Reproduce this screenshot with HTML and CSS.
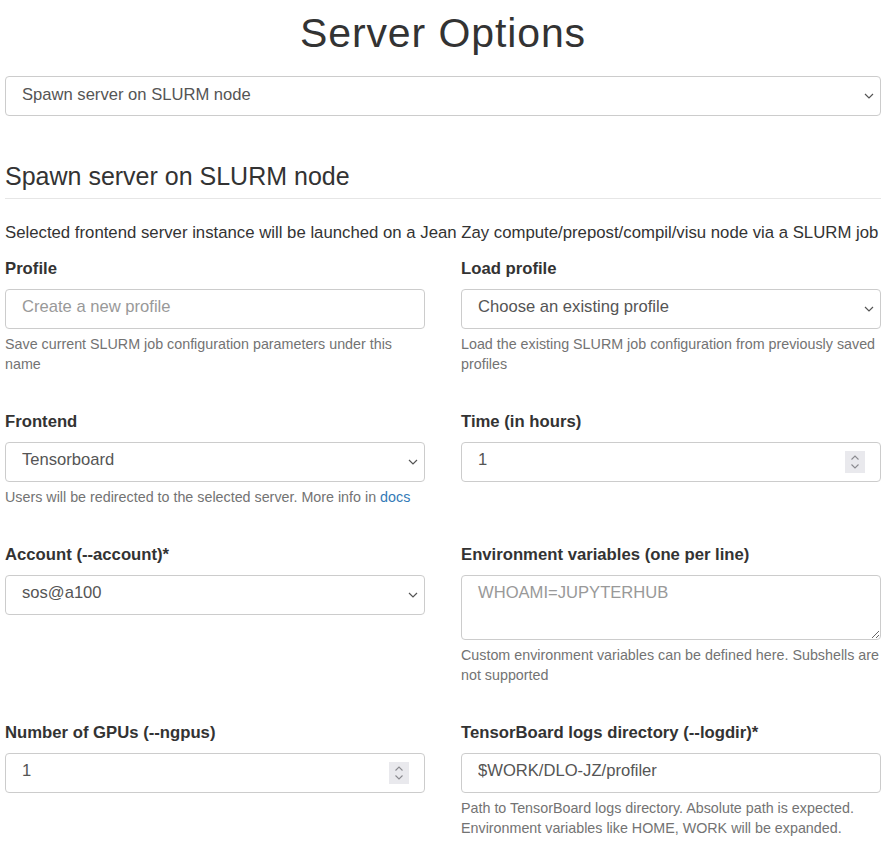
FILE: index.html
```html
<!DOCTYPE html>
<html lang="en">
<head>
<meta charset="utf-8">
<title>Server Options</title>
<link rel="stylesheet" href="styles.css">
</head>
<body>
<div class="page">
  <h1 class="title">Server Options</h1>
  <select class="control select">
    <option>Spawn server on SLURM node</option>
  </select>

  <h3 class="section-header">Spawn server on SLURM node</h3>
  <p class="intro">Selected frontend server instance will be launched on a Jean Zay compute/prepost/compil/visu node via a SLURM job</p>

  <div class="form-grid">
    <div class="group">
      <label class="label">Profile</label>
      <input class="control" type="text" placeholder="Create a new profile">
      <div class="help">Save current SLURM job configuration parameters under this name</div>
    </div>
    <div class="group">
      <label class="label">Load profile</label>
      <select class="control select"><option>Choose an existing profile</option></select>
      <div class="help">Load the existing SLURM job configuration from previously saved profiles</div>
    </div>

    <div class="group">
      <label class="label">Frontend</label>
      <select class="control select"><option>Tensorboard</option></select>
      <div class="help">Users will be redirected to the selected server. More info in <a class="link" href="#">docs</a></div>
    </div>
    <div class="group">
      <label class="label">Time (in hours)</label>
      <div class="number-wrap">
        <input class="control number" type="number" value="1">
        <span class="spinner"><svg width="20" height="22" viewBox="0 0 20 22"><path d="M6.5 8.5 L10 5 L13.5 8.5" fill="none" stroke="#8a8a8f" stroke-width="1.1"/><path d="M6.5 13.5 L10 17 L13.5 13.5" fill="none" stroke="#8a8a8f" stroke-width="1.1"/></svg></span>
      </div>
    </div>

    <div class="group">
      <label class="label">Account (--account)*</label>
      <select class="control select"><option>sos@a100</option></select>
    </div>
    <div class="group">
      <label class="label">Environment variables (one per line)</label>
      <textarea class="control textarea" placeholder="WHOAMI=JUPYTERHUB"></textarea>
      <div class="help">Custom environment variables can be defined here. Subshells are not supported</div>
    </div>

    <div class="group">
      <label class="label">Number of GPUs (--ngpus)</label>
      <div class="number-wrap">
        <input class="control number" type="number" value="1">
        <span class="spinner"><svg width="20" height="22" viewBox="0 0 20 22"><path d="M6.5 8.5 L10 5 L13.5 8.5" fill="none" stroke="#8a8a8f" stroke-width="1.1"/><path d="M6.5 13.5 L10 17 L13.5 13.5" fill="none" stroke="#8a8a8f" stroke-width="1.1"/></svg></span>
      </div>
    </div>
    <div class="group">
      <label class="label">TensorBoard logs directory (--logdir)*</label>
      <input class="control" type="text" value="$WORK/DLO-JZ/profiler">
      <div class="help">Path to TensorBoard logs directory. Absolute path is expected. Environment variables like HOME, WORK will be expanded.</div>
    </div>
  </div>
</div>
</body>
</html>
```

FILE: styles.css
```css
* { box-sizing: border-box; }

body {
  margin: 0;
  font-family: "Liberation Sans", Arial, Helvetica, sans-serif;
  font-size: 16.7px;
  color: #333;
  background: #fff;
}

.page {
  padding: 0 8px 0 5px;
}

.title {
  margin: 9px 0 19px;
  font-size: 41px;
  letter-spacing: 0.9px;
  font-weight: 400;
  line-height: 48px;
  text-align: center;
  color: #333;
}

.control {
  display: block;
  width: 100%;
  height: 40px;
  margin: 0;
  padding: 0 16px 4px;
  font-family: "Liberation Sans", Arial, Helvetica, sans-serif;
  font-size: 16.6px;
  color: #555;
  background-color: #fff;
  border: 1px solid #ccc;
  border-radius: 4px;
  outline: none;
}

.control::placeholder { color: #999; }

.select {
  -webkit-appearance: none;
  appearance: none;
  background-image: url("data:image/svg+xml;utf8,<svg xmlns='http://www.w3.org/2000/svg' width='10' height='6' viewBox='0 0 10 6'><path d='M1 1 L5 5 L9 1' fill='none' stroke='%23555' stroke-width='1.2'/></svg>");
  background-repeat: no-repeat;
  background-position: right 6px center;
  background-size: 10px 6px;
  padding-right: 28px;
}

.section-header {
  margin: 47px 0 0;
  padding-bottom: 7px;
  font-size: 25px;
  font-weight: 400;
  line-height: 27.5px;
  border-bottom: 1px solid #e6e6e6;
}

.intro {
  margin: 22px 0 12px;
  line-height: 24px;
  font-size: 16.75px;
}

.form-grid {
  display: grid;
  grid-template-columns: 1fr 1fr;
  column-gap: 36px;
  row-gap: 36px;
}

.group { min-width: 0; }

.label {
  display: block;
  margin-bottom: 8px;
  font-weight: 700;
  line-height: 24px;
}

.help {
  margin-top: 5px;
  font-size: 14.3px;
  line-height: 20px;
  color: #737373;
}

.link {
  color: #337ab7;
  text-decoration: none;
}

.number-wrap {
  position: relative;
}

.number {
  -moz-appearance: textfield;
}
.number::-webkit-inner-spin-button,
.number::-webkit-outer-spin-button {
  -webkit-appearance: none;
  margin: 0;
}

.spinner {
  position: absolute;
  top: 9px;
  right: 16px;
  width: 20px;
  height: 22px;
  background: #e9e9ed;
  display: flex;
}

.textarea {
  height: 65px;
  padding: 5px 16px;
  line-height: 24px;
  resize: vertical;
}
```
